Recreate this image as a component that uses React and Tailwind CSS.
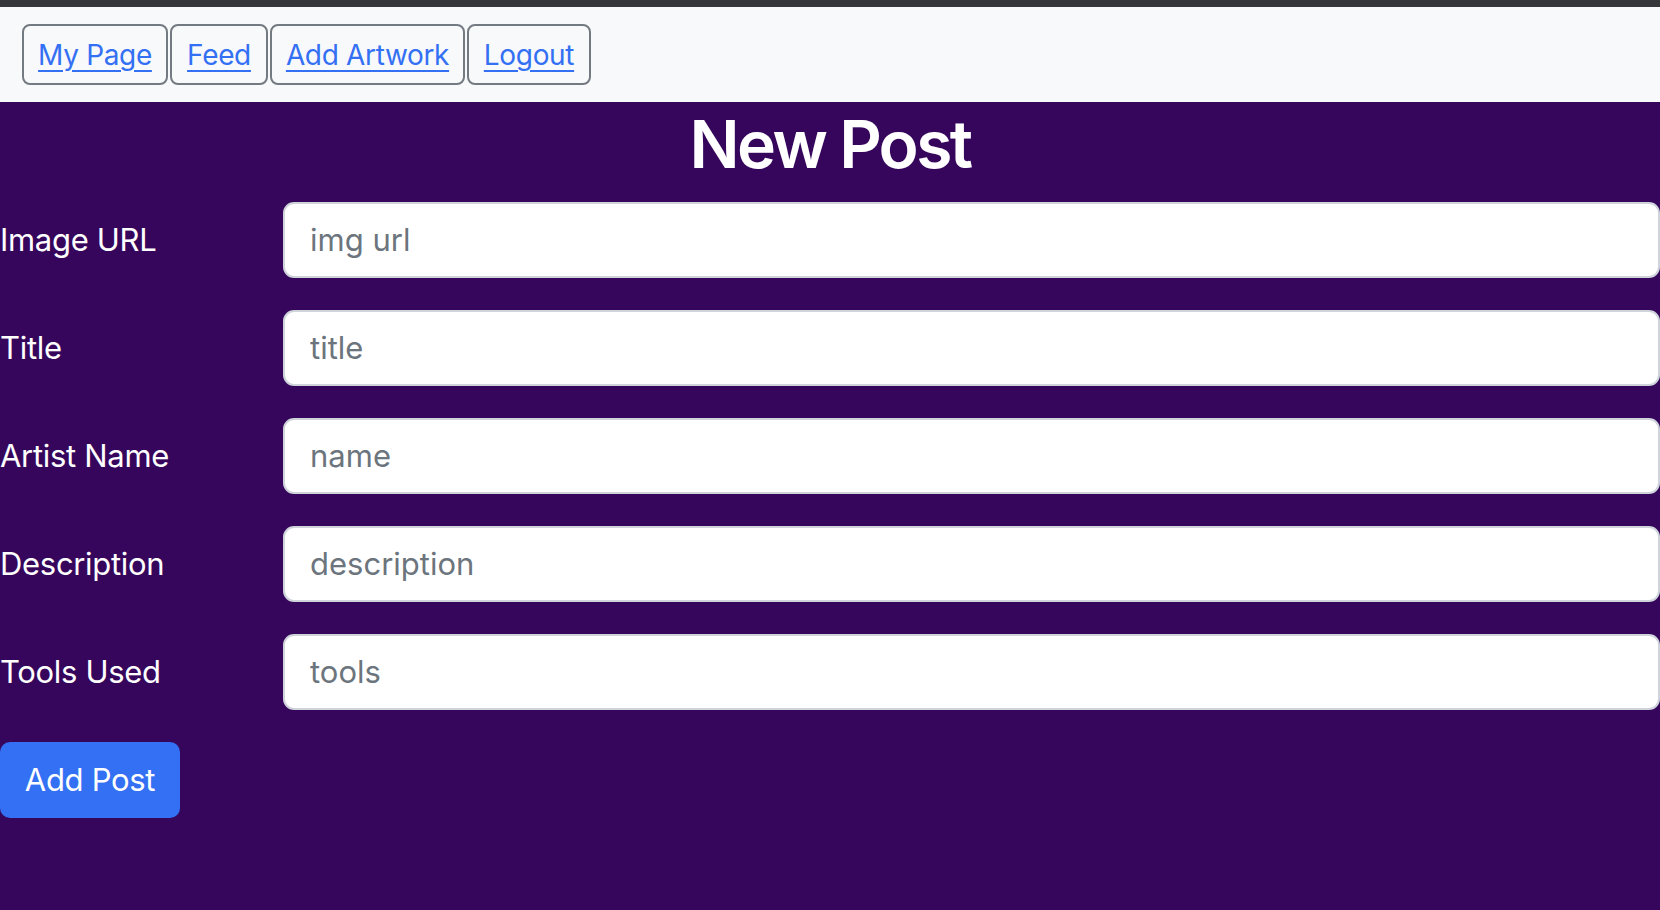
import React from "react";

const fields = [
  { label: "Image URL", placeholder: "img url" },
  { label: "Title", placeholder: "title" },
  { label: "Artist Name", placeholder: "name" },
  { label: "Description", placeholder: "description" },
  { label: "Tools Used", placeholder: "tools" },
];

const navs = [
  { t: "My Page", w: "w-[146px]" },
  { t: "Feed", w: "w-[98px]" },
  { t: "Add Artwork", w: "w-[195px]" },
  { t: "Logout", w: "w-[124px]" },
];

export default function App() {
  return (
    <div
      className="min-h-screen flex flex-col bg-[#36065c]"
      style={{ fontFamily: "Inter, 'Noto Sans', 'Liberation Sans', sans-serif" }}
    >
      <div className="h-[7px] bg-[#35363a]" />
      <nav className="h-[95px] bg-[#f8f9fa] flex items-center pl-[22px] gap-[2px]">
        {navs.map((n) => (
          <a
            key={n.t}
            href="#"
            className={`${n.w} h-[61px] flex items-center justify-center border-2 border-[#747a81] rounded-[8px] text-[28px] tracking-[-0.012em] text-[#3370f3] underline underline-offset-[5px] decoration-[2px]`}
          >
            {n.t}
          </a>
        ))}
      </nav>
      <main className="flex-1">
        <h1 className="mt-[2px] text-center text-[66px] leading-[1.24] font-semibold tracking-[-0.04em] text-white">
          New Post
        </h1>
        <form className="mt-[16px]" onSubmit={(e) => e.preventDefault()}>
          {fields.map((f) => (
            <div key={f.label} className="grid grid-cols-[283px_1fr] items-center mb-[32px]">
              <label className="text-[31px] tracking-[-0.01em] text-white leading-none">{f.label}</label>
              <input
                className="h-[76px] w-full bg-white border-2 border-[#ced4da] rounded-[11px] px-[25px] text-[31px] text-[#212529] placeholder:text-[#6c757d] outline-none"
                placeholder={f.placeholder}
              />
            </div>
          ))}
          <button
            type="submit"
            className="w-[180px] h-[76px] bg-[#3370f3] rounded-[10px] text-white text-[31px] tracking-[-0.01em]"
          >
            Add Post
          </button>
        </form>
      </main>
    </div>
  );
}
